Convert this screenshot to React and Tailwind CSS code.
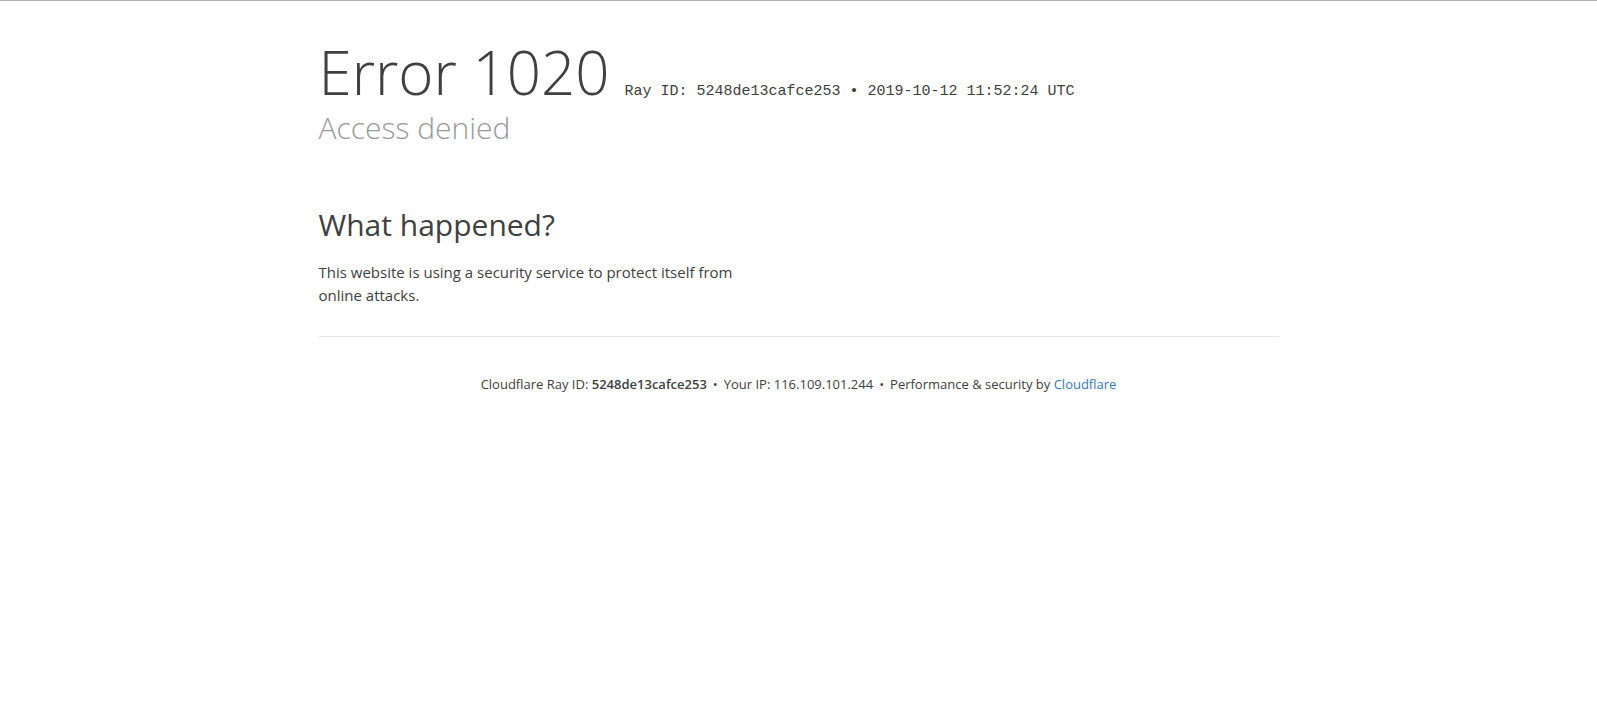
const RAY_ID = '5248de13cafce253'

export default function App() {
  return (
    <div className="min-h-[709px] bg-white border-t border-[#b3b3b3] text-[#404040] font-['Open_Sans',sans-serif]">
      <div className="w-[960px] mx-auto pt-[41px]">
        <header>
          <h1 className="text-[60px] leading-[60px] font-light whitespace-nowrap">
            <span>Error</span> <span>1020</span>
            <small className="ml-[15px] text-[15px] leading-none font-normal font-['Liberation_Mono',monospace] text-[#404040]">
              Ray ID: {RAY_ID} &bull; 2019-10-12 11:52:24 UTC
            </small>
          </h1>
          <h2 className="mt-[11px] text-[30px] leading-[30px] font-light text-[#999999]">Access denied</h2>
        </header>

        <section className="mt-[67px]">
          <div className="w-[458px]">
            <h2 className="text-[30px] leading-[30px] font-normal">What happened?</h2>
            <p className="mt-[21px] text-[15px] leading-[22.5px]">
              This website is using a security service to protect itself from online attacks.
            </p>
          </div>
        </section>

        <div className="mt-[30px] border-t border-[#e5e5e5]" />

        <footer className="mt-[38px] text-center text-[13px] leading-[19.5px]">
          <span>Cloudflare Ray ID: <strong className="font-semibold">{RAY_ID}</strong></span>
          <span className="mx-[6px]">&bull;</span>
          <span>Your IP: 116.109.101.244</span>
          <span className="mx-[6px]">&bull;</span>
          <span>
            Performance &amp; security by <a href="#" className="text-[#2f7bbf]">Cloudflare</a>
          </span>
        </footer>
      </div>
    </div>
  )
}
